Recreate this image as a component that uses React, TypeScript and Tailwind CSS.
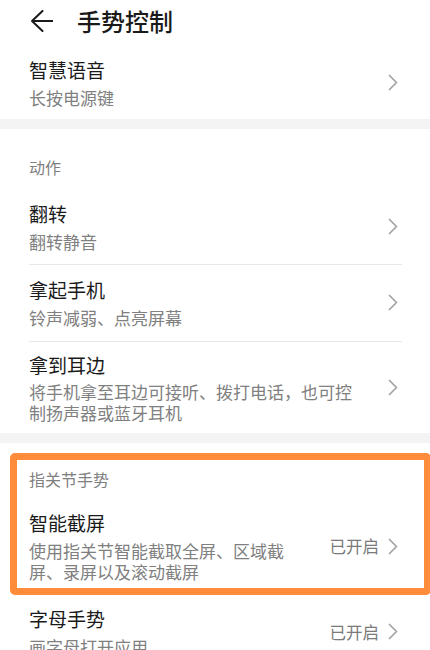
import React from "react";

const FONT = { fontFamily: '"Noto Sans CJK SC", "Noto Sans", sans-serif' };

function Chevron() {
  return (
    <svg width="10" height="17" viewBox="0 0 10 17" fill="none" className="shrink-0">
      <path d="M1.5 1.5 L8.5 8.5 L1.5 15.5" stroke="#a3a3a3" strokeWidth="1.7" strokeLinecap="round" strokeLinejoin="round" />
    </svg>
  );
}

function Row({
  title,
  sub,
  status,
  className,
}: {
  title: string;
  sub: string;
  status?: string;
  className: string;
}) {
  return (
    <div className={`flex items-center pl-[29px] pr-[32px] gap-[35px] ${className}`}>
      <div className="flex-1 min-w-0 flex flex-col">
        <div className="text-[19px] leading-[26px] text-[#1a1a1a]">{title}</div>
        <div className="text-[17px] leading-[21px] text-[#808080] mt-[4px]">{sub}</div>
      </div>
      <div className="flex items-center gap-[9px] shrink-0">
        {status && <span className="text-[16.5px] leading-[22px] text-[#7a7a7a]">{status}</span>}
        <Chevron />
      </div>
    </div>
  );
}

function Divider() {
  return <div className="h-px bg-[#e8e8e8] ml-[29px] mr-[28px]" />;
}

function Band() {
  return <div className="h-[10px] bg-[#f4f4f4]" />;
}

export default function App() {
  return (
    <div className="relative w-[430px] h-[650px] overflow-hidden bg-white" style={FONT}>
      <div className="h-[42px] flex items-center">
        <svg width="22" height="22" viewBox="0 0 22 22" fill="none" className="ml-[31px] shrink-0">
          <path d="M11.5 1 L1 11 L11.5 21 M1 11 H21.5" stroke="#1a1a1a" strokeWidth="2" strokeLinecap="round" strokeLinejoin="round" />
        </svg>
        <div className="ml-[24px] text-[24px] leading-[32px] font-medium text-[#1a1a1a]">手势控制</div>
      </div>

      <Row title="智慧语音" sub="长按电源键" className="pt-[15px] pb-[11px]" />
      <Band />

      <div className="pl-[29px] pt-[27px] text-[16px] leading-[22px] text-[#808080]">动作</div>
      <Row title="翻转" sub="翻转静音" className="pt-[23px] pb-[12px]" />
      <Divider />
      <Row title="拿起手机" sub="铃声减弱、点亮屏幕" className="pt-[12px] pb-[13px]" />
      <Divider />
      <Row
        title="拿到耳边"
        sub="将手机拿至耳边可接听、拨打电话，也可控制扬声器或蓝牙耳机"
        className="pt-[10px] pb-[10px] [&_div.mt-\[4px\]]:mt-[3px]"
      />
      <Band />

      <div className="pl-[29px] pt-[25px] text-[16px] leading-[22px] text-[#808080]">指关节手势</div>
      <Row
        title="智能截屏"
        sub="使用指关节智能截取全屏、区域截屏、录屏以及滚动截屏"
        status="已开启"
        className="pt-[20px] pb-[12px]"
      />
      <Row title="字母手势" sub="画字母打开应用" status="已开启" className="pt-[12px] pb-[12px]" />

      <div className="absolute left-[10px] top-[453px] w-[421px] h-[142px] border-[7px] border-[#ff8c3a] rounded-[5px] pointer-events-none" />
    </div>
  );
}
